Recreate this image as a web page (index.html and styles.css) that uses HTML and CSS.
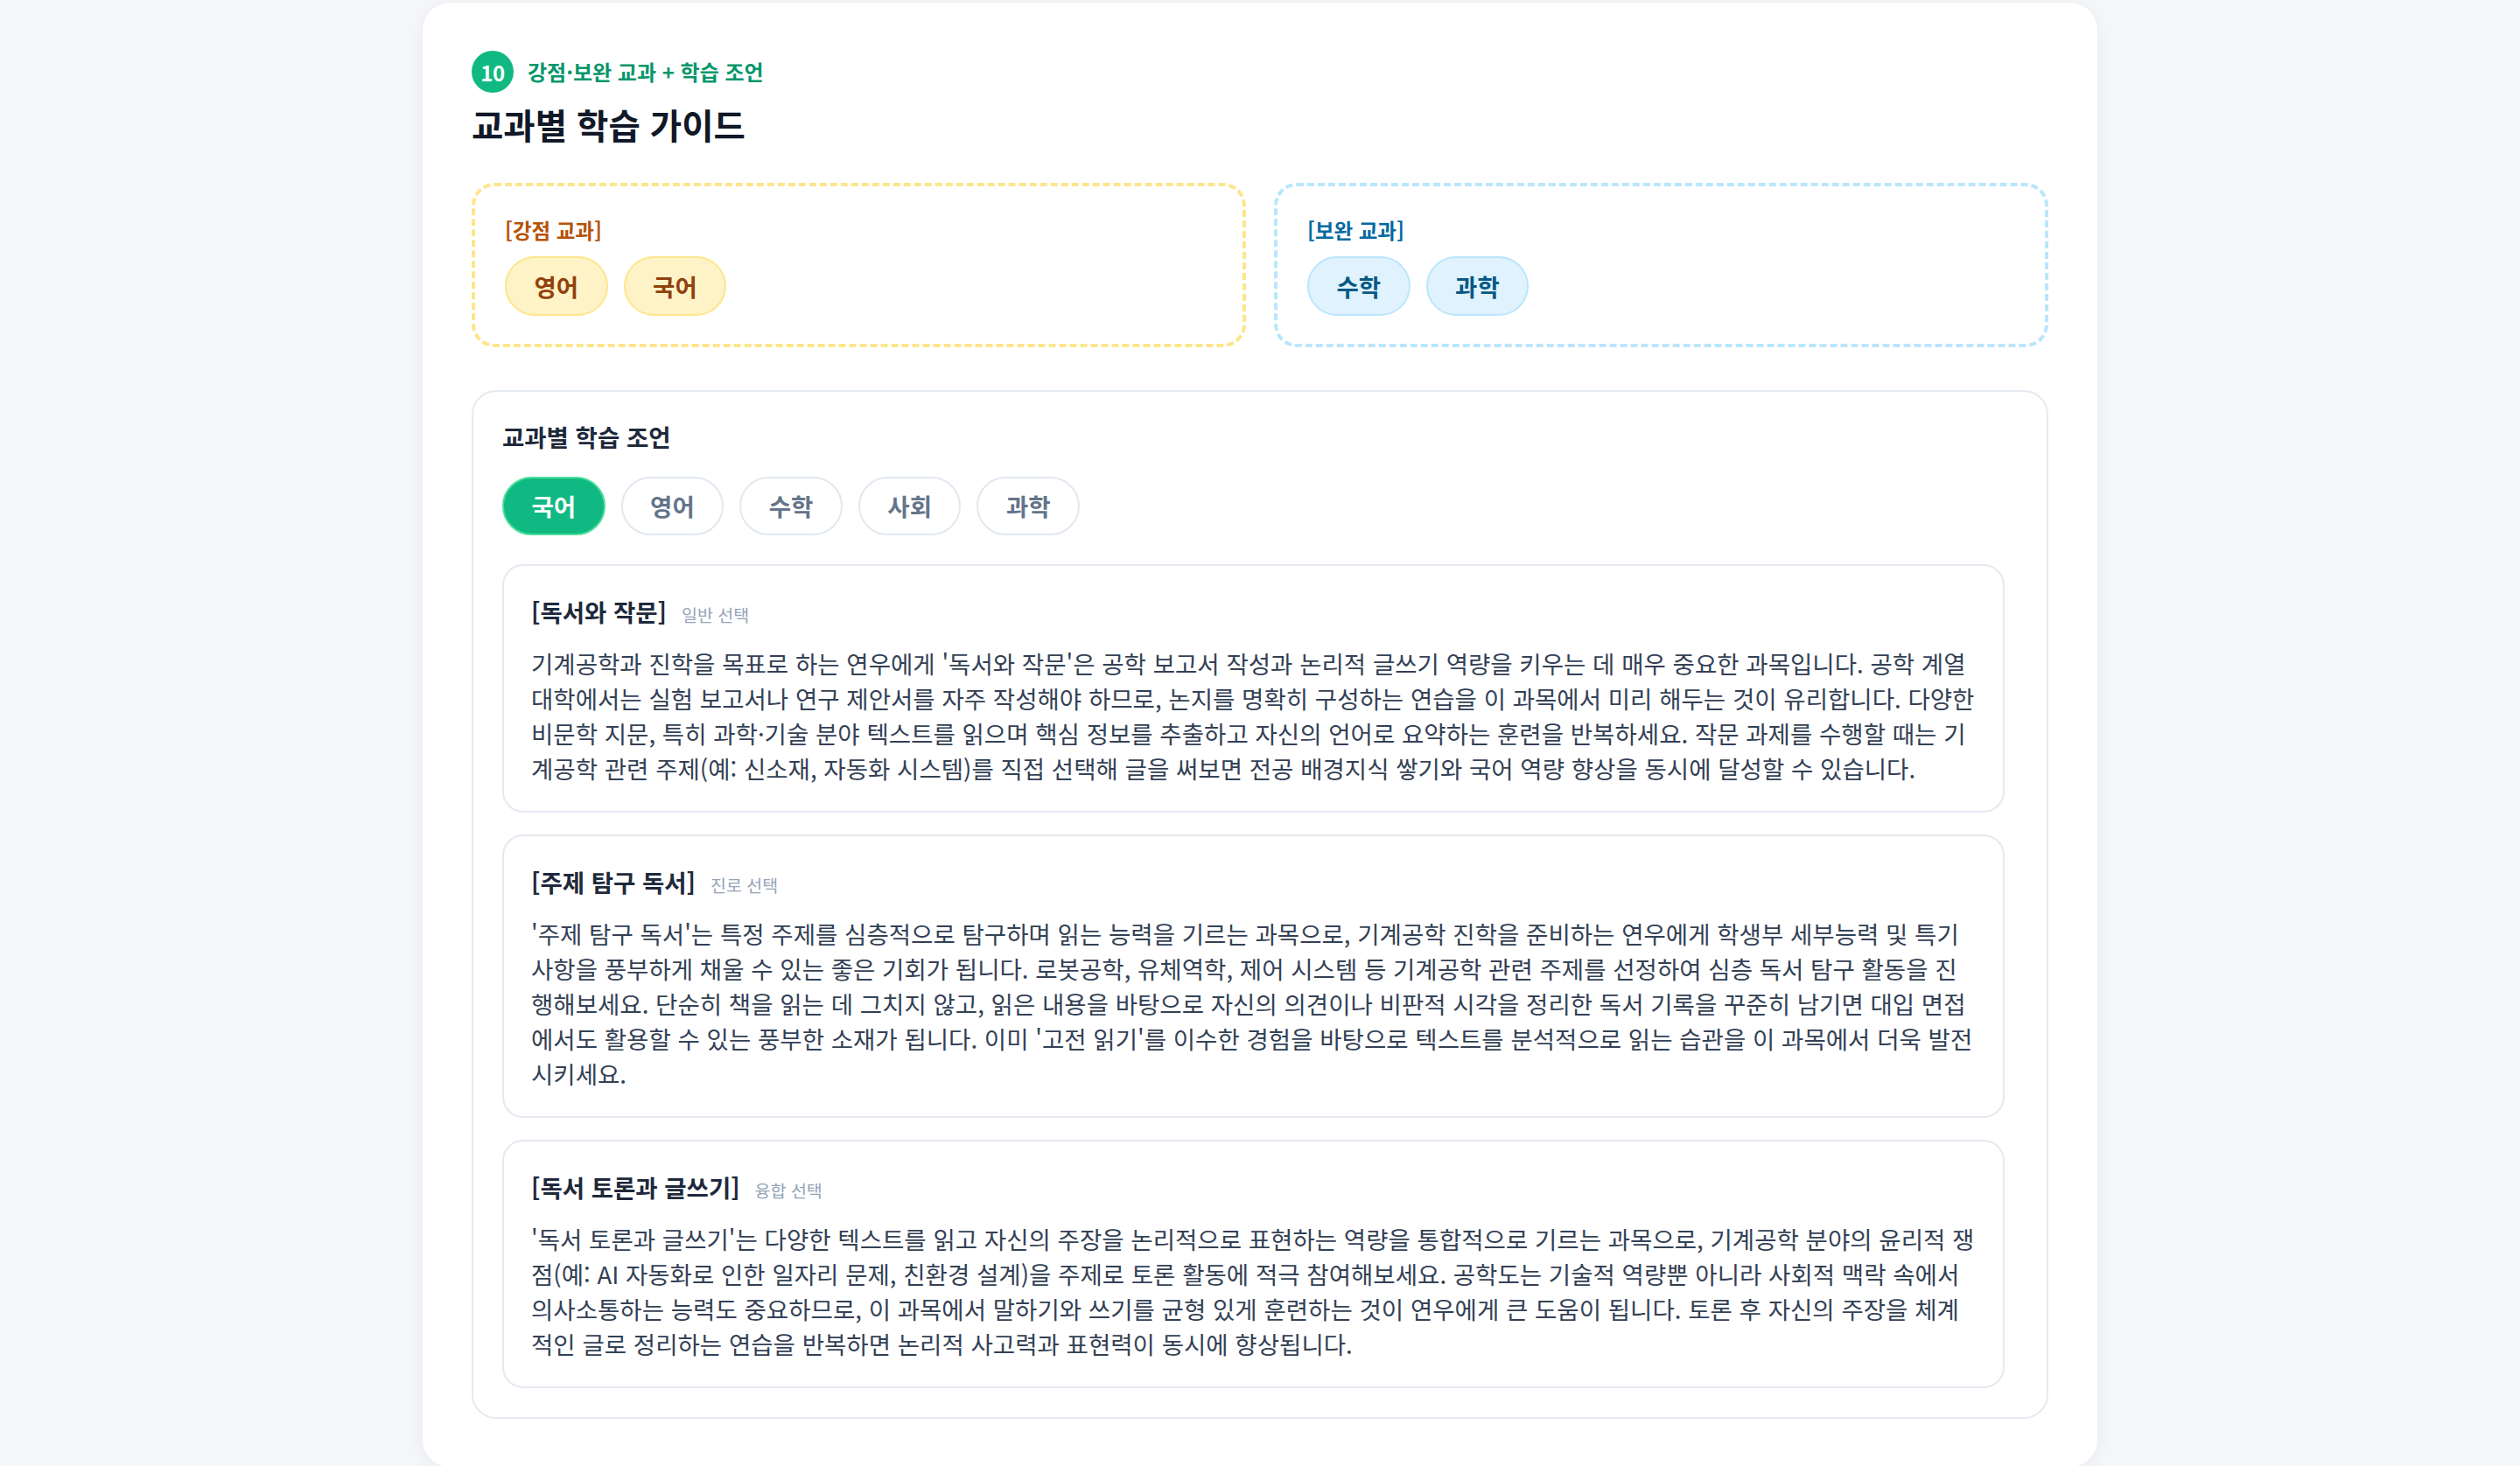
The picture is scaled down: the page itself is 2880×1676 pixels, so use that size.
FILE: index.html
```html
<!DOCTYPE html>
<html lang="ko">
<head>
<meta charset="utf-8">
<title>교과별 학습 가이드</title>
<link rel="stylesheet" href="styles.css">
</head>
<body>
<main class="page">
  <section class="sheet">
    <div class="step">
      <span class="step-num">10</span>
      <span class="step-label">강점·보완 교과 + 학습 조언</span>
    </div>
    <h1 class="title">교과별 학습 가이드</h1>

    <div class="subject-boxes">
      <div class="subject-box strong">
        <div class="box-title">[강점 교과]</div>
        <div class="chips">
          <span class="chip">영어</span>
          <span class="chip">국어</span>
        </div>
      </div>
      <div class="subject-box weak">
        <div class="box-title">[보완 교과]</div>
        <div class="chips">
          <span class="chip">수학</span>
          <span class="chip">과학</span>
        </div>
      </div>
    </div>

    <div class="advice">
      <h2 class="advice-title">교과별 학습 조언</h2>
      <div class="tabs">
        <span class="tab active">국어</span>
        <span class="tab">영어</span>
        <span class="tab">수학</span>
        <span class="tab">사회</span>
        <span class="tab">과학</span>
      </div>
      <div class="course-list">
        <article class="course">
          <h3 class="course-head"><span class="course-name">[독서와 작문]</span><span class="course-tag">일반 선택</span></h3>
          <p class="course-text">기계공학과 진학을 목표로 하는 연우에게 '독서와 작문'은 공학 보고서 작성과 논리적 글쓰기 역량을 키우는 데 매우 중요한 과목입니다. 공학 계열 대학에서는 실험 보고서나 연구 제안서를 자주 작성해야 하므로, 논지를 명확히 구성하는 연습을 이 과목에서 미리 해두는 것이 유리합니다. 다양한 비문학 지문, 특히 과학·기술 분야 텍스트를 읽으며 핵심 정보를 추출하고 자신의 언어로 요약하는 훈련을 반복하세요. 작문 과제를 수행할 때는 기계공학 관련 주제(예: 신소재, 자동화 시스템)를 직접 선택해 글을 써보면 전공 배경지식 쌓기와 국어 역량 향상을 동시에 달성할 수 있습니다.</p>
        </article>
        <article class="course">
          <h3 class="course-head"><span class="course-name">[주제 탐구 독서]</span><span class="course-tag">진로 선택</span></h3>
          <p class="course-text">'주제 탐구 독서'는 특정 주제를 심층적으로 탐구하며 읽는 능력을 기르는 과목으로, 기계공학 진학을 준비하는 연우에게 학생부 세부능력 및 특기사항을 풍부하게 채울 수 있는 좋은 기회가 됩니다. 로봇공학, 유체역학, 제어 시스템 등 기계공학 관련 주제를 선정하여 심층 독서 탐구 활동을 진행해보세요. 단순히 책을 읽는 데 그치지 않고, 읽은 내용을 바탕으로 자신의 의견이나 비판적 시각을 정리한 독서 기록을 꾸준히 남기면 대입 면접에서도 활용할 수 있는 풍부한 소재가 됩니다. 이미 '고전 읽기'를 이수한 경험을 바탕으로 텍스트를 분석적으로 읽는 습관을 이 과목에서 더욱 발전시키세요.</p>
        </article>
        <article class="course">
          <h3 class="course-head"><span class="course-name">[독서 토론과 글쓰기]</span><span class="course-tag">융합 선택</span></h3>
          <p class="course-text">'독서 토론과 글쓰기'는 다양한 텍스트를 읽고 자신의 주장을 논리적으로 표현하는 역량을 통합적으로 기르는 과목으로, 기계공학 분야의 윤리적 쟁점(예: AI 자동화로 인한 일자리 문제, 친환경 설계)을 주제로 토론 활동에 적극 참여해보세요. 공학도는 기술적 역량뿐 아니라 사회적 맥락 속에서 의사소통하는 능력도 중요하므로, 이 과목에서 말하기와 쓰기를 균형 있게 훈련하는 것이 연우에게 큰 도움이 됩니다. 토론 후 자신의 주장을 체계적인 글로 정리하는 연습을 반복하면 논리적 사고력과 표현력이 동시에 향상됩니다.</p>
        </article>
      </div>
    </div>
  </section>
</main>
</body>
</html>
```

FILE: styles.css
```css
* {
  box-sizing: border-box;
}

html, body {
  margin: 0;
  padding: 0;
}

body {
  background: #f5f7fa;
  font-family: "Noto Sans CJK KR", "Noto Sans", sans-serif;
  color: #1e293b;
}

.page {
  display: flex;
  justify-content: center;
  padding-top: 2px;
}

.sheet {
  width: 1916px;
  background: #ffffff;
  border: 1px solid #eef1f5;
  border-radius: 32px;
  padding: 55px 56px 55px;
  box-shadow: 0 4px 28px rgba(15, 23, 42, 0.05);
}

.step {
  display: flex;
  align-items: center;
  gap: 16px;
  height: 48px;
}

.step-num {
  width: 48px;
  height: 48px;
  border-radius: 50%;
  background: #10b981;
  color: #ffffff;
  font-weight: 700;
  font-size: 24px;
  display: flex;
  align-items: center;
  justify-content: center;
  letter-spacing: -0.5px;
}

.step-label {
  color: #059669;
  font-weight: 700;
  font-size: 24px;
  line-height: 32px;
}

.title {
  margin: 11px 0 42px;
  font-size: 39.5px;
  line-height: 50px;
  font-weight: 700;
  color: #111827;
}

.subject-boxes {
  display: grid;
  grid-template-columns: 1fr 1fr;
  gap: 32px;
}

.subject-box {
  border: 4px dashed;
  border-radius: 26px;
  padding: 32px 34px;
}

.subject-box.strong {
  border-color: #fde68a;
}

.subject-box.weak {
  border-color: #bae6fd;
}

.box-title {
  font-size: 23.5px;
  line-height: 36px;
  font-weight: 700;
}

.strong .box-title {
  color: #b45309;
}

.weak .box-title {
  color: #0369a1;
}

.chips {
  display: flex;
  gap: 18px;
  margin-top: 12px;
}

.chip {
  display: inline-block;
  padding: 12px 31.5px;
  border: 2px solid;
  border-radius: 999px;
  font-size: 27.5px;
  line-height: 40px;
  font-weight: 700;
}

.strong .chip {
  background: #fef3c7;
  border-color: #fde68a;
  color: #92400e;
}

.weak .chip {
  background: #e0f2fe;
  border-color: #bae6fd;
  color: #075985;
}

.advice {
  margin-top: 49px;
  border: 2px solid #e5e9f0;
  border-radius: 28px;
  padding: 34px 48px 33px 33px;
}

.advice-title {
  margin: 0;
  font-size: 27.5px;
  line-height: 35px;
  font-weight: 700;
  color: #1e293b;
}

.tabs {
  display: flex;
  gap: 18px;
  margin-top: 28px;
}

.tab {
  display: inline-block;
  padding: 12px 31.5px;
  border: 2px solid #e2e8f0;
  border-radius: 999px;
  font-size: 27.5px;
  line-height: 39px;
  font-weight: 700;
  color: #64748b;
  background: #ffffff;
}

.tab.active {
  background: #10b981;
  border-color: #4ade9a;
  color: #ffffff;
}

.course-list {
  display: flex;
  flex-direction: column;
  gap: 25px;
  margin-top: 33px;
}

.course {
  border: 2px solid #e5e9f0;
  border-radius: 24px;
  padding: 33px 30px 29px 31px;
}

.course-head {
  margin: 0;
  display: flex;
  align-items: baseline;
  gap: 17px;
  line-height: 39px;
}

.course-name {
  font-size: 27.5px;
  font-weight: 700;
  color: #1e293b;
}

.course-tag {
  font-size: 19.5px;
  font-weight: 400;
  color: #94a3b8;
}

.course-text {
  margin: 16px 0 0;
  font-size: 27.55px;
  line-height: 40px;
  color: #334155;
}
```
